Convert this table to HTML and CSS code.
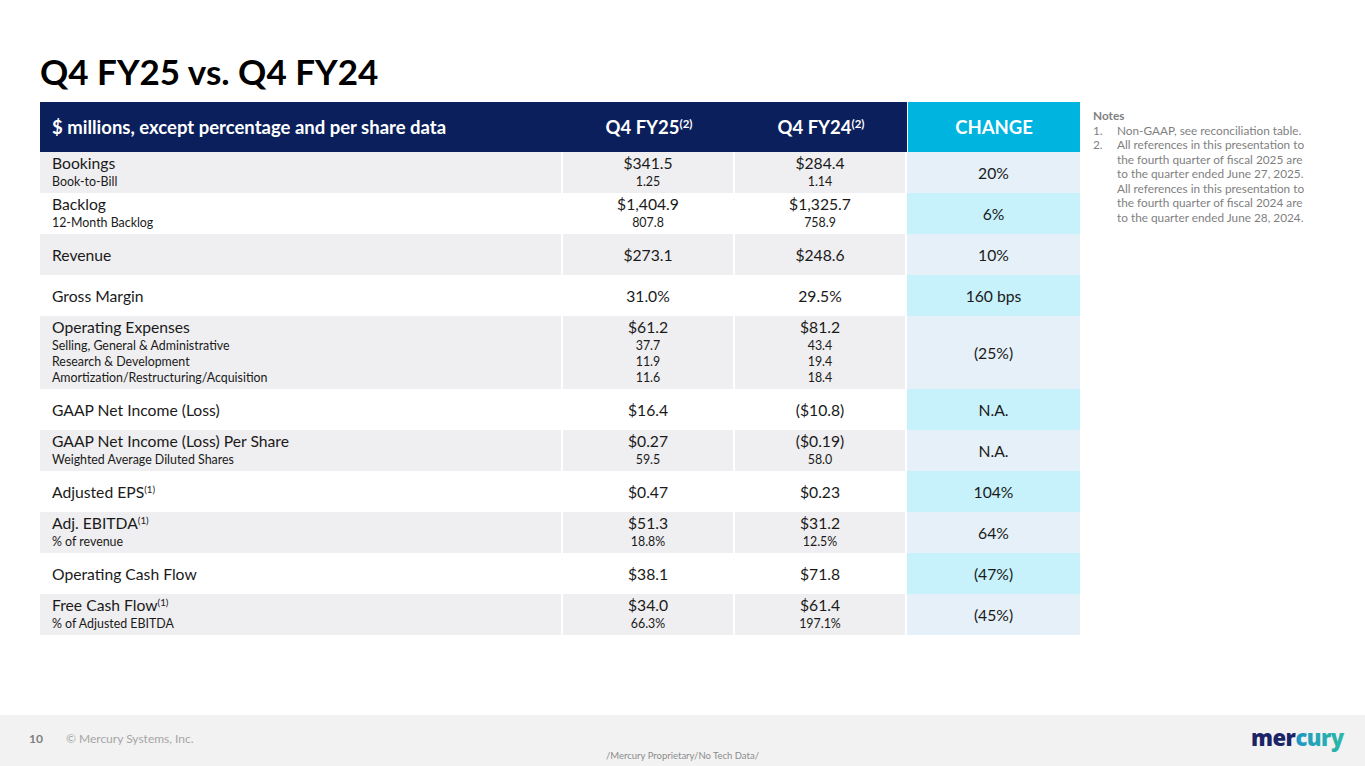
FILE: index.html
```html
<!DOCTYPE html>
<html lang="en">
<head>
<meta charset="utf-8">
<title>Q4 FY25 vs. Q4 FY24</title>
<link rel="stylesheet" href="styles.css">
</head>
<body>
<div class="slide">
  <h1 class="title">Q4 FY25 vs. Q4 FY24</h1>
  <div class="content">
    <table class="fin">
      <colgroup>
        <col class="c-label"><col class="c-val"><col class="c-val"><col class="c-chg">
      </colgroup>
      <thead>
        <tr>
          <th class="h-label">$ millions, except percentage and per share data</th>
          <th class="h-val">Q4 FY25<sup>(2)</sup></th>
          <th class="h-val">Q4 FY24<sup>(2)</sup></th>
          <th class="h-chg">CHANGE</th>
        </tr>
      </thead>
      <tbody>
        <tr class="g">
          <td class="label"><div class="main">Bookings</div><div class="sub">Book-to-Bill</div></td>
          <td class="val"><div class="main">$341.5</div><div class="sub">1.25</div></td>
          <td class="val"><div class="main">$284.4</div><div class="sub">1.14</div></td>
          <td class="chg">20%</td>
        </tr>
        <tr class="w">
          <td class="label"><div class="main">Backlog</div><div class="sub">12-Month Backlog</div></td>
          <td class="val"><div class="main">$1,404.9</div><div class="sub">807.8</div></td>
          <td class="val"><div class="main">$1,325.7</div><div class="sub">758.9</div></td>
          <td class="chg">6%</td>
        </tr>
        <tr class="g">
          <td class="label single">Revenue</td>
          <td class="val single">$273.1</td>
          <td class="val single">$248.6</td>
          <td class="chg">10%</td>
        </tr>
        <tr class="w">
          <td class="label single">Gross Margin</td>
          <td class="val single">31.0%</td>
          <td class="val single">29.5%</td>
          <td class="chg">160 bps</td>
        </tr>
        <tr class="g tall">
          <td class="label"><div class="main">Operating Expenses</div><div class="sub">Selling, General &amp; Administrative</div><div class="sub">Research &amp; Development</div><div class="sub">Amortization/Restructuring/Acquisition</div></td>
          <td class="val"><div class="main">$61.2</div><div class="sub">37.7</div><div class="sub">11.9</div><div class="sub">11.6</div></td>
          <td class="val"><div class="main">$81.2</div><div class="sub">43.4</div><div class="sub">19.4</div><div class="sub">18.4</div></td>
          <td class="chg">(25%)</td>
        </tr>
        <tr class="w">
          <td class="label single">GAAP Net Income (Loss)</td>
          <td class="val single">$16.4</td>
          <td class="val single">($10.8)</td>
          <td class="chg">N.A.</td>
        </tr>
        <tr class="g">
          <td class="label"><div class="main">GAAP Net Income (Loss) Per Share</div><div class="sub">Weighted Average Diluted Shares</div></td>
          <td class="val"><div class="main">$0.27</div><div class="sub">59.5</div></td>
          <td class="val"><div class="main">($0.19)</div><div class="sub">58.0</div></td>
          <td class="chg">N.A.</td>
        </tr>
        <tr class="w">
          <td class="label single">Adjusted EPS<sup>(1)</sup></td>
          <td class="val single">$0.47</td>
          <td class="val single">$0.23</td>
          <td class="chg">104%</td>
        </tr>
        <tr class="g">
          <td class="label"><div class="main">Adj. EBITDA<sup>(1)</sup></div><div class="sub">% of revenue</div></td>
          <td class="val"><div class="main">$51.3</div><div class="sub">18.8%</div></td>
          <td class="val"><div class="main">$31.2</div><div class="sub">12.5%</div></td>
          <td class="chg">64%</td>
        </tr>
        <tr class="w">
          <td class="label single">Operating Cash Flow</td>
          <td class="val single">$38.1</td>
          <td class="val single">$71.8</td>
          <td class="chg">(47%)</td>
        </tr>
        <tr class="g">
          <td class="label"><div class="main">Free Cash Flow<sup>(1)</sup></div><div class="sub">% of Adjusted EBITDA</div></td>
          <td class="val"><div class="main">$34.0</div><div class="sub">66.3%</div></td>
          <td class="val"><div class="main">$61.4</div><div class="sub">197.1%</div></td>
          <td class="chg">(45%)</td>
        </tr>
      </tbody>
    </table>
    <aside class="notes">
      <div class="notes-title">Notes</div>
      <ol class="notes-list">
        <li><span class="num">1.</span><span class="txt">Non-GAAP, see reconciliation table.</span></li>
        <li><span class="num">2.</span><span class="txt">All references in this presentation to<br>the fourth quarter of fiscal 2025 are<br>to the quarter ended June 27, 2025.<br>All references in this presentation to<br>the fourth quarter of fiscal 2024 are<br>to the quarter ended June 28, 2024.</span></li>
      </ol>
    </aside>
  </div>
  <footer class="footer">
    <div class="foot-left">
      <span class="page-num">10</span>
      <span class="copy">© Mercury Systems, Inc.</span>
    </div>
    <div class="foot-mid">/Mercury Proprietary/No Tech Data/</div>
    <div class="foot-right">
      <svg class="logo" width="108" height="34" viewBox="0 0 108 34" aria-label="mercury">
        <defs>
          <linearGradient id="lg" x1="0" y1="0" x2="1" y2="0">
            <stop offset="0" stop-color="#1a57a8"/>
            <stop offset="0.5" stop-color="#1f98c4"/>
            <stop offset="1" stop-color="#2bb9a4"/>
          </linearGradient>
        </defs>
        <text x="2" y="25" class="logo-text"><tspan fill="#1b2466">mer</tspan><tspan fill="url(#lg)">cury</tspan></text>
      </svg>
    </div>
  </footer>
</div>
</body>
</html>
```
FILE: styles.css
```css
* { box-sizing: border-box; }
html, body { margin: 0; padding: 0; }
body {
  font-family: Lato, "Open Sans", sans-serif;
  color: #1a1a1a;
  background: #fff;
}
.slide {
  width: 1365px;
  height: 766px;
  display: flex;
  flex-direction: column;
  overflow: hidden;
}
.title {
  margin: 50px 0 0 40px;
  font-size: 35px;
  line-height: 43px;
  font-weight: 700;
  color: #000;
}
.content {
  flex: 1;
  display: flex;
  align-items: flex-start;
  margin-top: 9px;
  padding-left: 40px;
}
.fin {
  width: 1040px;
  table-layout: fixed;
  border-collapse: separate;
  border-spacing: 0;
  flex: none;
}
.c-label { width: 523px; }
.c-val { width: 172px; }
.c-chg { width: 173px; }
.fin thead th {
  height: 50px;
  background: #0b1f5c;
  color: #fff;
  font-size: 18.5px;
  font-weight: 700;
  padding: 0;
}
.fin sup {
  font-size: 0.62em;
  line-height: 0;
  vertical-align: 0.55em;
}
.h-label { text-align: left; padding-left: 12px !important; }
.h-val { text-align: center; }
.h-chg {
  text-align: center;
  background: #00b4e0 !important;
  border-left: 1px solid #fff;
}
.fin tbody tr { height: 41px; }
.fin tbody tr.tall { height: 73px; }
.fin td {
  padding: 0;
  font-size: 15.7px;
}
.fin td.label, .fin td.val {
  border-right: 2px solid #fff;
  vertical-align: top;
  padding-top: 1px;
}
.fin td.single { vertical-align: middle; padding-top: 0; }
.fin td.label { padding-left: 12px; text-align: left; }
.fin td.val { text-align: center; }
.fin td.chg {
  text-align: center;
  vertical-align: middle;
}
.g td { background: #efeef0; }
.w td { background: #fff; }
.g td.chg { background: #e6f0f8; }
.w td.chg { background: #c7f1fb; }
.main { line-height: 21px; font-size: 15.7px; }
.sub { line-height: 16px; font-size: 12.4px; }
.notes {
  margin-left: 13px;
  margin-top: 7px;
  color: #7f7f7f;
  font-size: 11.8px;
  line-height: 14.5px;
}
.notes-title { font-weight: 700; }
.notes-list { list-style: none; margin: 0; padding: 0; }
.notes-list li { display: flex; }
.notes-list .num { width: 24px; flex: none; }
.notes-list .txt { white-space: nowrap; }
.footer {
  height: 51px;
  background: #f2f2f2;
  display: flex;
  align-items: center;
  position: relative;
  flex: none;
}
.foot-left {
  padding-left: 29px;
  display: flex;
  gap: 23px;
  font-size: 12px;
  margin-top: -4px;
}
.page-num { font-weight: 700; color: #7f7f7f; }
.copy { color: #a6a6a6; }
.foot-mid {
  position: absolute;
  left: 0;
  right: 0;
  bottom: 5px;
  text-align: center;
  font-size: 9.5px;
  color: #8c8c8c;
}
.foot-right {
  margin-left: auto;
  margin-right: 8px;
  margin-top: -6px;
}
.logo { display: block; }
.logo-text {
  font-family: "Open Sans", Lato, sans-serif;
  font-weight: 800;
  font-size: 22px;
  letter-spacing: -0.5px;
}
```
